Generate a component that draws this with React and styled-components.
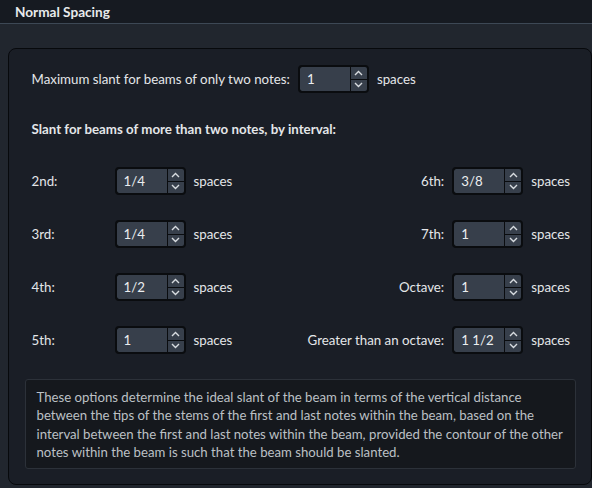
import React from "react";
import styled, { createGlobalStyle } from "styled-components";

const GlobalStyle = createGlobalStyle`
  html, body {
    margin: 0;
    padding: 0;
    background: #21262e;
    font-family: "Lato", "Noto Sans", sans-serif;
    -webkit-font-smoothing: antialiased;
  }
  #root {
    width: 592px;
    height: 488px;
    overflow: hidden;
  }
`;

const intervals = [
  { left: "2nd:", leftValue: "1/4", right: "6th:", rightValue: "3/8" },
  { left: "3rd:", leftValue: "1/4", right: "7th:", rightValue: "1" },
  { left: "4th:", leftValue: "1/2", right: "Octave:", rightValue: "1" },
  { left: "5th:", leftValue: "1", right: "Greater than an octave:", rightValue: "1 1/2" },
];

const Spinner = ({ value }) => (
  <SpinBox>
    <SpinField>{value}</SpinField>
    <SpinButtons>
      <SpinButton>
        <svg width="9" height="6" viewBox="0 0 9 6">
          <path d="M1 5 L4.5 1.5 L8 5" fill="none" stroke="#d8dce0" strokeWidth="1.4" />
        </svg>
      </SpinButton>
      <SpinButton>
        <svg width="9" height="6" viewBox="0 0 9 6">
          <path d="M1 1 L4.5 4.5 L8 1" fill="none" stroke="#d8dce0" strokeWidth="1.4" />
        </svg>
      </SpinButton>
    </SpinButtons>
  </SpinBox>
);

const App = () => {
  return (
    <>
      <GlobalStyle />
      <Page>
        <Header>Normal Spacing</Header>
        <Body>
          <Panel>
            <TopRow>
              <Label>Maximum slant for beams of only two notes:</Label>
              <Spinner value="1" />
              <Unit>spaces</Unit>
            </TopRow>
            <Heading>Slant for beams of more than two notes, by interval:</Heading>
            <Rows>
              {intervals.map((row) => (
                <Row key={row.left}>
                  <Group>
                    <LeftLabel>{row.left}</LeftLabel>
                    <Spinner value={row.leftValue} />
                    <Unit>spaces</Unit>
                  </Group>
                  <Group>
                    <Label>{row.right}</Label>
                    <Spinner value={row.rightValue} />
                    <Unit>spaces</Unit>
                  </Group>
                </Row>
              ))}
            </Rows>
            <Info>
              These options determine the ideal slant of the beam in terms of the vertical
              distance between the tips of the stems of the first and last notes within the
              beam, based on the interval between the first and last notes within the beam,
              provided the contour of the other notes within the beam is such that the beam
              should be slanted.
            </Info>
          </Panel>
        </Body>
      </Page>
    </>
  );
};

const Page = styled.div`
  display: flex;
  flex-direction: column;
  height: 488px;
`;

const Header = styled.div`
  height: 23px;
  flex-shrink: 0;
  background: #161a21;
  border-bottom: 1px solid #3d4855;
  padding-left: 15px;
  display: flex;
  align-items: center;
  color: #e8eaec;
  font-weight: 700;
  font-size: 13.6px;
`;

const Body = styled.div`
  flex: 1;
  padding: 24px 0 3px 8px;
  display: flex;
  min-height: 0;
`;

const Panel = styled.div`
  flex: 1;
  background: #1a1e26;
  border: 1.5px solid #07090c;
  border-radius: 8px;
  padding: 16px 21px 15px 14.5px;
  display: flex;
  flex-direction: column;
  color: #e4e6e9;
  font-size: 13.3px;
`;

const TopRow = styled.div`
  display: flex;
  align-items: center;
  gap: 8px;
  padding-left: 8px;
`;

const Heading = styled.div`
  font-weight: 700;
  margin: 27px 0 0 8px;
  line-height: 18px;
`;

const Rows = styled.div`
  display: flex;
  flex-direction: column;
  gap: 25px;
  margin-top: 29px;
  padding-left: 8px;
`;

const Row = styled.div`
  display: flex;
  justify-content: space-between;
  align-items: center;
`;

const Group = styled.div`
  display: flex;
  align-items: center;
  gap: 8px;
`;

const Label = styled.span`
  white-space: nowrap;
`;

const LeftLabel = styled(Label)`
  width: 75px;
`;

const Unit = styled.span`
  white-space: nowrap;
`;

const SpinBox = styled.div`
  width: 71px;
  height: 28px;
  box-sizing: border-box;
  border: 2px solid #0a0c0f;
  border-radius: 4px;
  background: #0a0c0f;
  display: flex;
  gap: 1px;
  overflow: hidden;
`;

const SpinField = styled.div`
  flex: 1;
  background: #373f4b;
  color: #eceef0;
  display: flex;
  align-items: center;
  padding-left: 7px;
  border-radius: 2px 0 0 2px;
`;

const SpinButtons = styled.div`
  width: 16px;
  display: flex;
  flex-direction: column;
  gap: 1px;
`;

const SpinButton = styled.div`
  flex: 1;
  background: #373f4b;
  display: flex;
  align-items: center;
  justify-content: center;
`;

const Info = styled.div`
  margin: 25px -6px 0 1px;
  background: #15181d;
  border: 1px solid #2c3139;
  border-radius: 3px;
  padding: 8px 12px 7px 11px;
  color: #bcc0c5;
  font-size: 13.2px;
  line-height: 18.3px;
`;

export default App;
